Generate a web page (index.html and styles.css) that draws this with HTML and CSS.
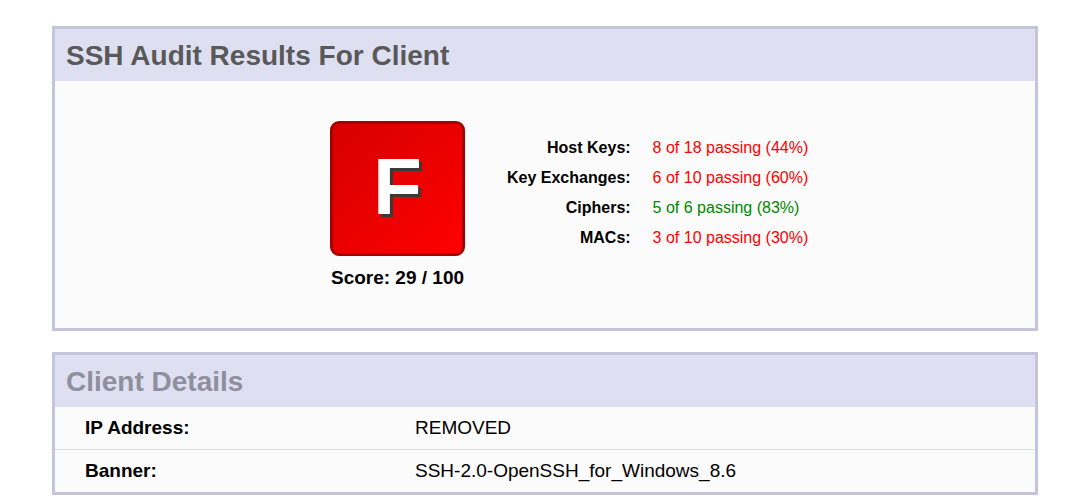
FILE: index.html
```html
<!DOCTYPE html>
<html>
<head>
<meta charset="utf-8">
<title>SSH Audit Results</title>
<link rel="stylesheet" href="styles.css">
</head>
<body>
<div class="page">
  <section class="panel">
    <h2 class="panel-title">SSH Audit Results For Client</h2>
    <div class="summary">
      <div class="grade-col">
        <div class="grade-box"><span class="grade-letter">F</span></div>
        <div class="score">Score: 29 / 100</div>
      </div>
      <div class="stats">
        <div class="stat-label">Host Keys:</div><div class="stat-value fail">8 of 18 passing (44%)</div>
        <div class="stat-label">Key Exchanges:</div><div class="stat-value fail">6 of 10 passing (60%)</div>
        <div class="stat-label">Ciphers:</div><div class="stat-value pass">5 of 6 passing (83%)</div>
        <div class="stat-label">MACs:</div><div class="stat-value fail">3 of 10 passing (30%)</div>
      </div>
    </div>
  </section>
  <section class="panel details">
    <h2 class="panel-title muted">Client Details</h2>
    <div class="detail-row">
      <div class="detail-label">IP Address:</div>
      <div class="detail-value">REMOVED</div>
    </div>
    <div class="detail-row">
      <div class="detail-label">Banner:</div>
      <div class="detail-value">SSH-2.0-OpenSSH_for_Windows_8.6</div>
    </div>
  </section>
</div>
</body>
</html>
```
FILE: styles.css
```css
html, body {
  margin: 0;
  padding: 0;
  background: #ffffff;
  font-family: "Liberation Sans", Arial, sans-serif;
  color: #000;
}
.page {
  padding: 26px 52px 0 52px;
  display: flex;
  flex-direction: column;
  gap: 21px;
}
.panel {
  border: 3px solid #c4c4dd;
  background: #fbfbfb;
}
.panel-title {
  margin: 0;
  height: 52px;
  line-height: 53px;
  padding-left: 11px;
  background: #dfdff2;
  font-size: 28px;
  font-weight: bold;
  color: #595959;
}
.panel-title.muted {
  color: #8f8f9d;
}
.summary {
  height: 247px;
  box-sizing: border-box;
  padding: 40px 0 0 275px;
  display: flex;
  align-items: flex-start;
  gap: 42px;
}
.grade-col {
  display: flex;
  flex-direction: column;
  align-items: center;
  width: 135px;
}
.grade-box {
  width: 135px;
  height: 135px;
  box-sizing: border-box;
  border: 3px solid #a80000;
  border-radius: 9px;
  background: linear-gradient(135deg, #d60000 0%, #ff0000 100%);
  display: flex;
  align-items: center;
  justify-content: center;
}
.grade-letter {
  color: #ffffff;
  font-size: 80px;
  font-weight: bold;
  line-height: 1;
  text-shadow: 3px 3px 0 #3a3a3a;
  margin-top: -4px;
}
.score {
  margin-top: 11px;
  font-size: 19px;
  font-weight: bold;
  white-space: nowrap;
}
.stats {
  margin-top: 12px;
  display: grid;
  grid-template-columns: auto auto;
  column-gap: 22px;
  grid-auto-rows: 30px;
  align-items: center;
  font-size: 16px;
}
.stat-label {
  font-weight: bold;
  text-align: right;
}
.stat-value.fail { color: #ff0000; }
.stat-value.pass { color: #008800; }
.detail-row {
  display: grid;
  grid-template-columns: 360px 1fr;
  height: 42px;
  align-items: center;
  font-size: 19px;
}
.detail-row + .detail-row {
  border-top: 1px solid #dddddd;
}
.detail-label {
  padding-left: 30px;
  font-weight: bold;
}
```
